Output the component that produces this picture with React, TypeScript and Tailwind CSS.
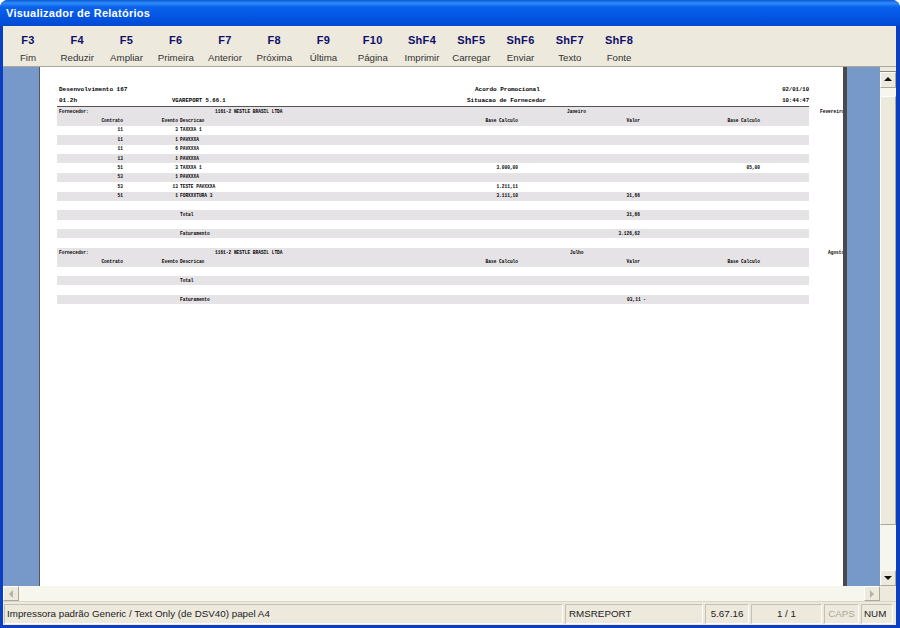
import React from 'react';

const keys = [
  ['F3', 'Fim'],
  ['F4', 'Reduzir'],
  ['F5', 'Ampliar'],
  ['F6', 'Primeira'],
  ['F7', 'Anterior'],
  ['F8', 'Próxima'],
  ['F9', 'Última'],
  ['F10', 'Página'],
  ['ShF4', 'Imprimir'],
  ['ShF5', 'Carregar'],
  ['ShF6', 'Enviar'],
  ['ShF7', 'Texto'],
  ['ShF8', 'Fonte'],
];

type RowData = {
  band?: boolean;
  contrato?: string;
  evento?: string;
  desc?: string;
  base?: string;
  valor?: string;
  credit?: boolean;
  base2?: string;
};

const ReportRow: React.FC<RowData> = ({ band, contrato, evento, desc, base, valor, credit, base2 }) => (
  <div
    className={`grid h-[9.4px] w-[752px] grid-cols-[66px_55px_2px_306px_32px_122px_120px] items-center pt-[0.5px] leading-none whitespace-nowrap ${
      band ? 'bg-[#e6e3e6]' : ''
    }`}
  >
    <span className="text-right">{contrato}</span>
    <span className="text-right">{evento}</span>
    <span />
    <span>{desc}</span>
    <span className="flex justify-end">{base}</span>
    <span className={`flex justify-end ${credit ? '-mr-[6px]' : ''}`}>{valor}</span>
    <span className="flex justify-end">{base2}</span>
  </div>
);

const SupplierRow: React.FC<{ month: string; next: string; monthPad: string; nextPad: string }> = ({
  month,
  next,
  monthPad,
  nextPad,
}) => (
  <div className="flex h-[9.4px] w-[752px] items-center bg-[#e6e3e6] pt-px leading-none whitespace-nowrap">
    <span className="w-[158px] shrink-0 pl-[2px]">Fornecedor:</span>
    <span className="w-[352px] shrink-0">1161-2 NESTLE BRASIL LTDA</span>
    <span className={`w-[253px] shrink-0 ${monthPad}`}>{month}</span>
    <span className={`shrink-0 ${nextPad}`}>{next}</span>
  </div>
);

const Report = () => (
  <div className="h-full w-[803px] shrink-0 overflow-hidden bg-white pl-[17px] pt-[18px] font-['Liberation_Mono',monospace] text-[4.5px] font-bold text-black">
    <div className="flex h-[10px] w-[752px] items-center text-[6px] leading-none whitespace-nowrap">
      <span className="w-[418px] shrink-0 pl-[2px]">Desenvolvimento 167</span>
      <span className="flex-1">Acordo Promocional</span>
      <span className="text-[5.6px]">02/01/10</span>
    </div>
    <div className="mt-px flex h-[10px] w-[752px] items-center text-[6px] leading-none whitespace-nowrap">
      <span className="w-[115px] shrink-0 pl-[2px]">01.2h</span>
      <span className="w-[295px] shrink-0 text-[5.6px]">VGAREPORT 5.66.1</span>
      <span className="flex-1">Situacao de Fornecedor</span>
      <span className="text-[5.6px]">10:44:47</span>
    </div>
    <div className="h-px w-[752px] bg-[#555]" />
    <SupplierRow month="Janeiro" next="Fevereiro" monthPad="" nextPad="" />
    <ReportRow band contrato="Contrato" evento="Evento" desc="Descricao" base="Base Calculo" valor="Valor" base2="Base Calculo" />
    <ReportRow contrato="11" evento="3" desc="TAXXXA 1" />
    <ReportRow band contrato="11" evento="1" desc="PAVXXXA" />
    <ReportRow contrato="11" evento="6" desc="PAVXXXA" />
    <ReportRow band contrato="13" evento="1" desc="PAVXXXA" />
    <ReportRow contrato="51" evento="3" desc="TAXXXA 1" base="3.000,00" base2="05,00" />
    <ReportRow band contrato="53" evento="1" desc="PAVXXXA" />
    <ReportRow contrato="53" evento="13" desc="TESTE PAVXXXA" base="1.211,11" />
    <ReportRow band contrato="51" evento="1" desc="FORXXXTURA 3" base="3.111,10" valor="31,66" />
    <ReportRow />
    <ReportRow band desc="Total" valor="31,66" />
    <ReportRow />
    <ReportRow band desc="Faturamento" valor="3.126,62" />
    <ReportRow />
    <SupplierRow month="Julho" next="Agosto" monthPad="pl-[3px]" nextPad="pl-[8px]" />
    <ReportRow band contrato="Contrato" evento="Evento" desc="Descricao" base="Base Calculo" valor="Valor" base2="Base Calculo" />
    <ReportRow />
    <ReportRow band desc="Total" />
    <ReportRow />
    <ReportRow band desc="Faturamento" valor="03,11 -" credit />
  </div>
);

const Arrow = ({ dir, muted }: { dir: 'up' | 'down' | 'left' | 'right'; muted?: boolean }) => {
  const pts = { up: '0,5 8,5 4,1', down: '0,2 8,2 4,6', left: '6,0 6,8 2,4', right: '2,0 2,8 6,4' }[dir];
  return (
    <svg width="8" height="8" viewBox="0 0 8 8">
      <polygon points={pts} fill={muted ? '#b4b3a8' : '#111'} />
    </svg>
  );
};

const ScrollButton = ({ dir, muted, className }: { dir: 'up' | 'down' | 'left' | 'right'; muted?: boolean; className: string }) => (
  <div
    className={`flex shrink-0 items-center justify-center border border-t-white border-l-white border-r-[#aca899] border-b-[#aca899] bg-[#ede9dd] ${className}`}
  >
    <Arrow dir={dir} muted={muted} />
  </div>
);

const StatusCell = ({ className, children }: { className: string; children: React.ReactNode }) => (
  <div
    className={`flex h-[20px] shrink-0 items-center border border-t-[#c4c1b2] border-l-[#c4c1b2] border-r-white border-b-white pt-px ${className}`}
  >
    {children}
  </div>
);

export default function App() {
  return (
    <div className="flex h-[628px] w-[900px] flex-col overflow-hidden rounded-t-lg bg-[#0a3fc4] font-['Liberation_Sans',sans-serif]">
      {/* barra de titulo */}
      <div className="flex h-[26px] shrink-0 items-center bg-[linear-gradient(180deg,#0a58d8_0px,#2f8cf8_3px,#0a62ec_7px,#0456e4_16px,#0349d0_26px)] pl-[6px] text-[11px] font-bold tracking-[0.26px] text-white">
        Visualizador de Relatórios
      </div>

      <div className="mr-[4px] ml-[3px] flex min-h-0 flex-1 flex-col bg-[#ede9dd]">
        {/* toolbar */}
        <div className="flex h-[41px] shrink-0 border-b border-b-[#aca899] pl-[0.4px]">
          {keys.map(([key, label]) => (
            <div key={key} className="flex w-[49.25px] shrink-0 flex-col items-center pt-[6px] whitespace-nowrap">
              <span className="h-[17px] text-[11px] leading-[17px] font-bold tracking-[0.3px] text-[#10106a]">{key}</span>
              <span className="text-[9.7px] leading-[17px] text-[#333]">{label}</span>
            </div>
          ))}
        </div>

        <div className="flex min-h-0 flex-1">
          <div className="flex min-w-0 flex-1 flex-col">
            {/* area do relatorio */}
            <div className="flex min-h-0 flex-1 bg-[#7699c9]">
              <div className="w-[37px] shrink-0 border-r border-r-[#556]" />
              <Report />
              <div className="w-[4px] shrink-0 bg-[#4a4a4a]" />
              <div className="flex-1" />
            </div>
          </div>

          <div className="flex w-[16px] shrink-0 flex-col bg-[#f6f5ee]">
            <div className="h-[5px] shrink-0 border-b border-b-[#8a887c] bg-[#ede9dd]" />
            <ScrollButton dir="up" className="h-[16px]" />
            <div className="h-[8px] shrink-0" />
            <div className="flex-1 border border-t-white border-l-white border-r-[#aca899] border-b-[#aca899] bg-[#ede9dd]" />
            <div className="h-[45px] shrink-0" />
            <ScrollButton dir="down" className="h-[16px]" />
          </div>
        </div>

        {/* scroll horizontal */}
        <div className="flex h-[16px] shrink-0 border-b border-b-[#d8d5c4] pr-[16px]">
          <ScrollButton dir="left" muted className="w-[16px]" />
          <div className="flex-1 bg-[#f6f5ee]" />
          <ScrollButton dir="right" muted className="w-[16px]" />
        </div>

        {/* barra de status */}
        <div className="flex h-[23px] shrink-0 items-center gap-[2px] pl-px text-[9.8px] text-[#222]">
          <StatusCell className="w-[559px] pl-[2px]">Impressora padrão Generic / Text Only (de DSV40) papel A4</StatusCell>
          <StatusCell className="w-[138px] pl-[3px]">RMSREPORT</StatusCell>
          <StatusCell className="w-[44px] justify-center">5.67.16</StatusCell>
          <StatusCell className="w-[71px] justify-center">1 / 1</StatusCell>
          <StatusCell className="w-[35px] justify-center text-[#aca899]">CAPS</StatusCell>
          <StatusCell className="w-[32px] pl-[2px]">NUM</StatusCell>
        </div>
      </div>
      <div className="h-[3px] shrink-0" />
    </div>
  );
}
